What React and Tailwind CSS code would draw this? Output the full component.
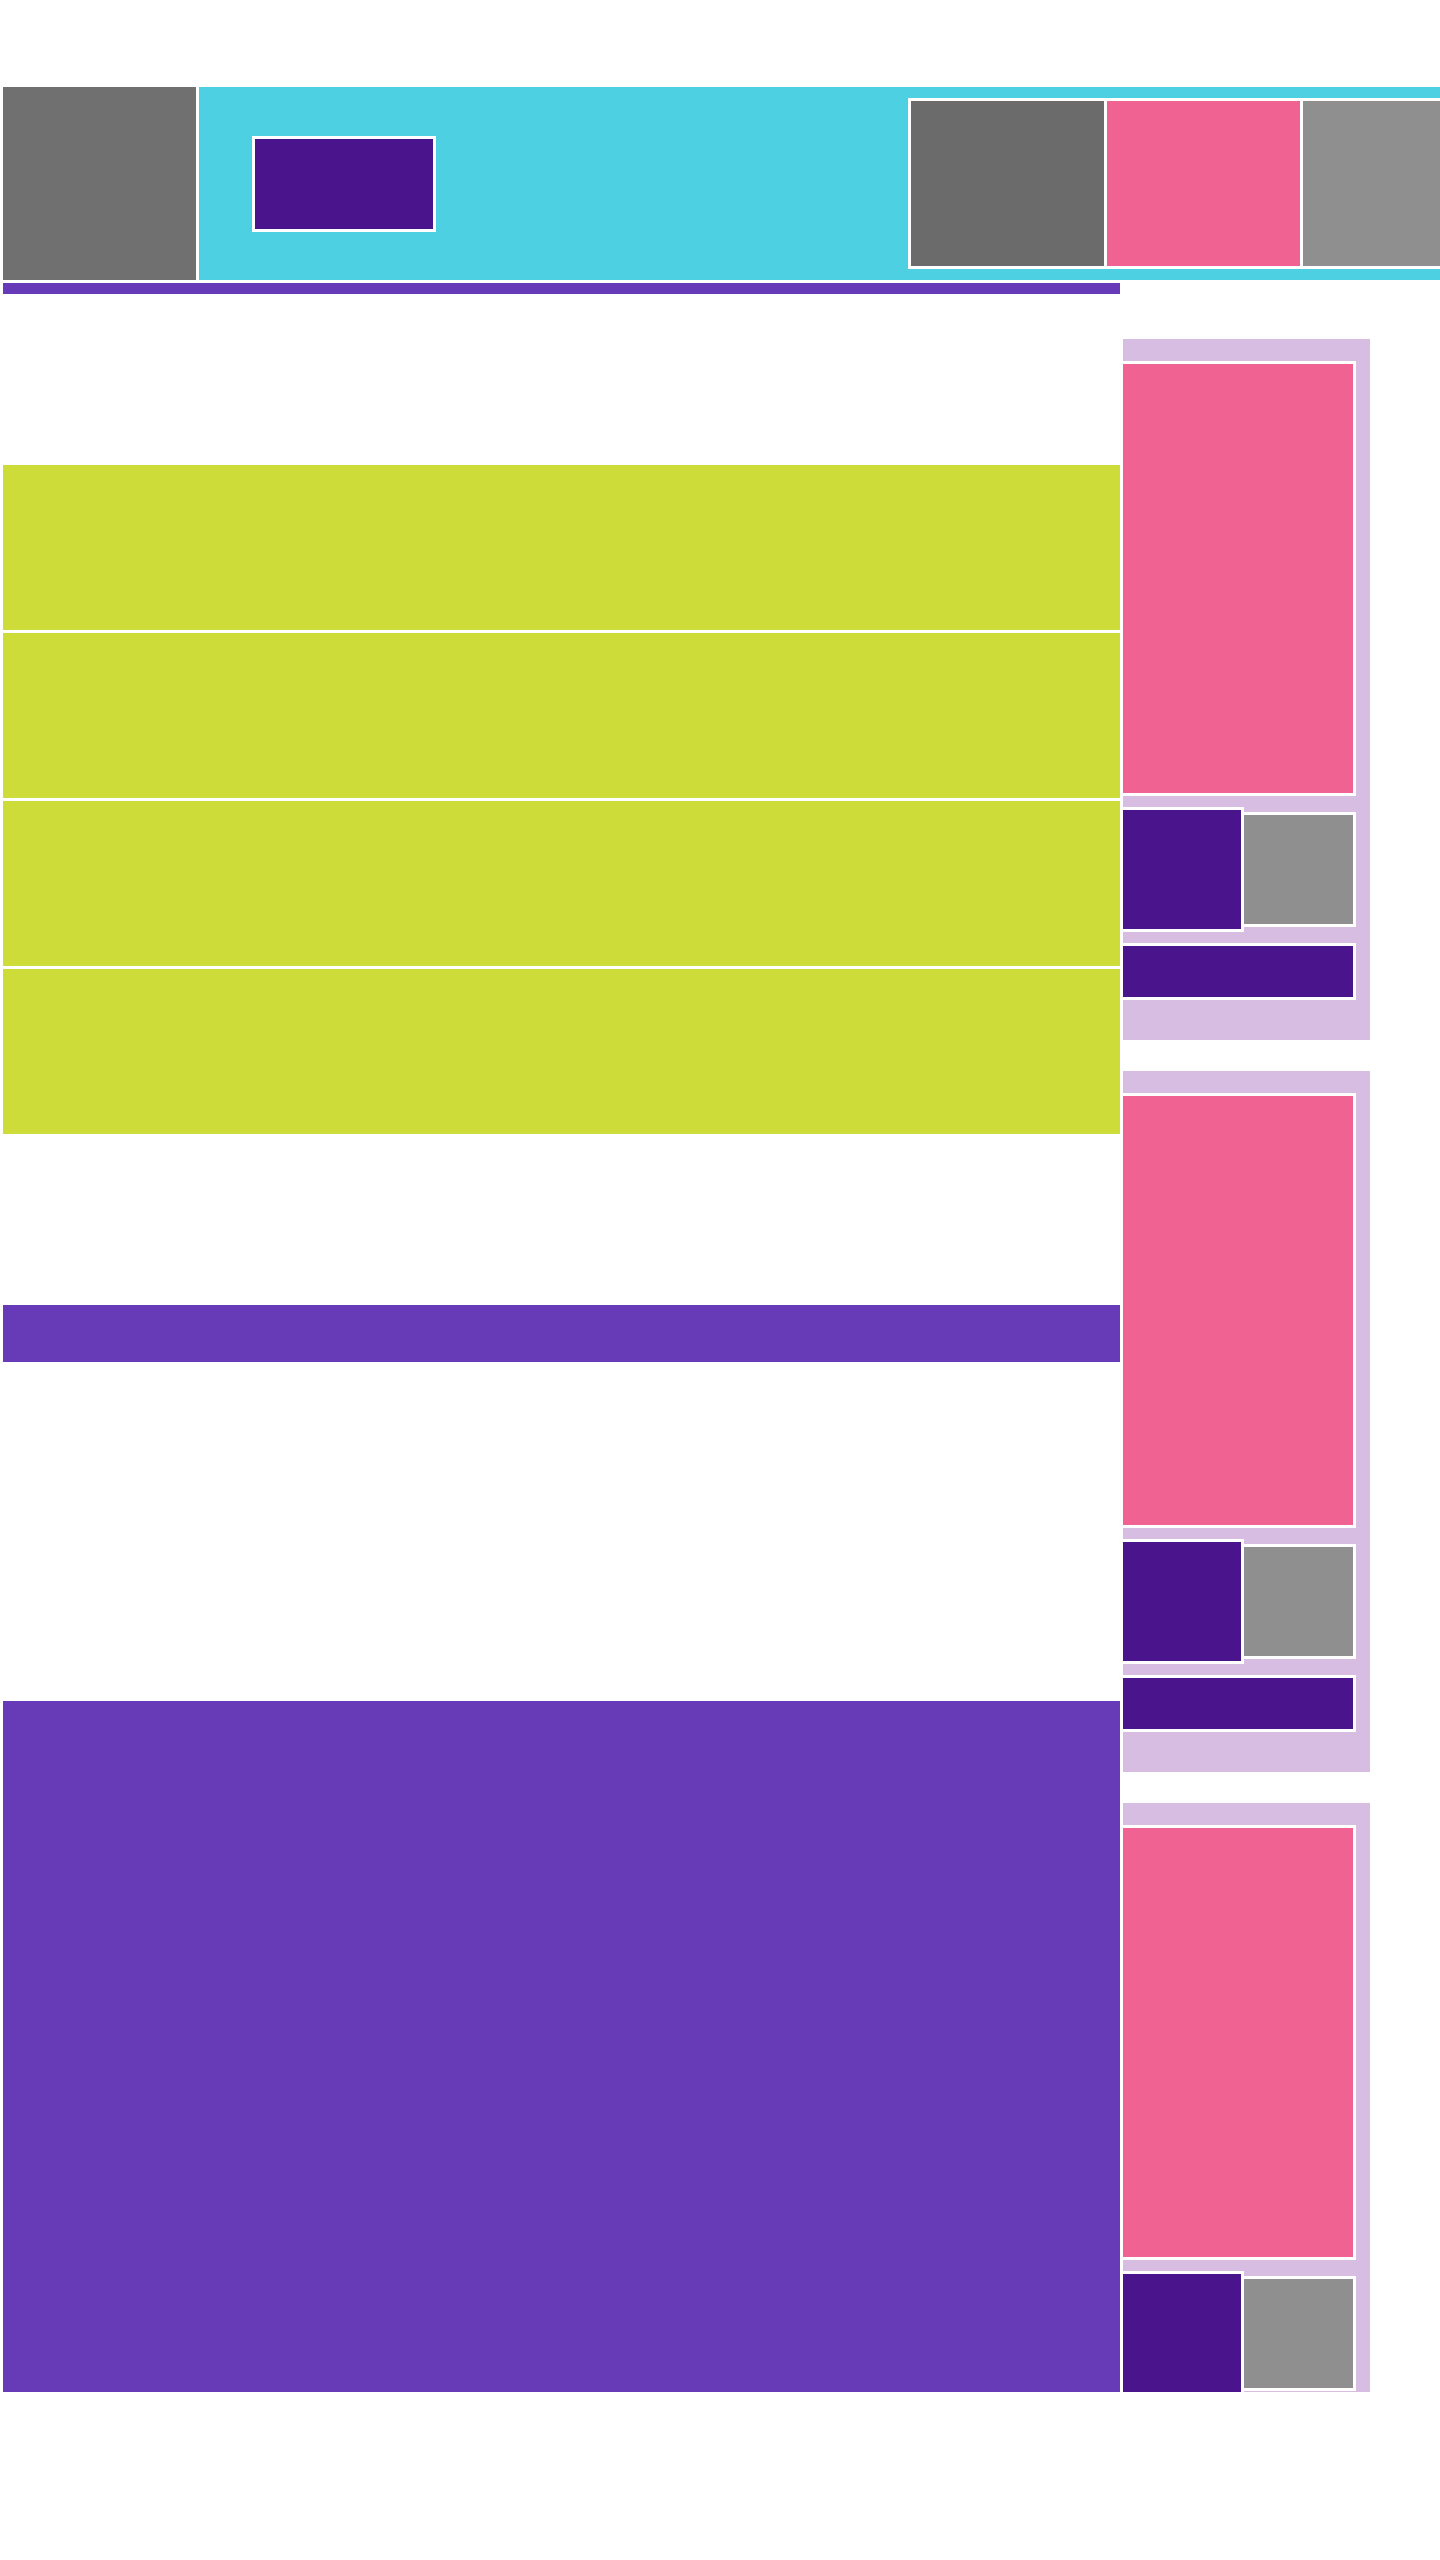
const SidePanel = () => (
  <div className="h-[701px] w-[247px] shrink-0 bg-[#d7bde2] pt-[22px] pr-[14px]">
    <div className="-ml-[3px] h-[435px] w-[236px] border-[3px] border-white bg-[#f06292]" />
    <div className="-ml-[3px] mt-[11px] flex h-[125px] items-center">
      <div className="h-[125px] w-[124px] shrink-0 border-[3px] border-white bg-[#4a148c]" />
      <div className="-ml-[3px] h-[115px] w-[115px] shrink-0 border-[3px] border-white bg-[#8f8f8f]" />
    </div>
    <div className="-ml-[3px] mt-[11px] h-[57px] w-[236px] border-[3px] border-white bg-[#4a148c]" />
  </div>
);

const App = () => {
  return (
    <div className="h-[2560px] w-[1440px] overflow-hidden bg-white pt-[87px] pl-[3px]">
      <header className="flex h-[193px] gap-[3px]">
        <div className="h-[193px] w-[193px] shrink-0 bg-[#707070]" />
        <div className="flex flex-1 items-center overflow-hidden bg-[#4dd0e1] pl-[53px]">
          <div className="h-[96px] w-[184px] shrink-0 border-[3px] border-white bg-[#4a148c]" />
          <div className="ml-[472px] flex h-[171px] shrink-0 gap-[3px] bg-white p-[3px]">
            <div className="h-[165px] w-[193px] shrink-0 bg-[#6b6b6b]" />
            <div className="h-[165px] w-[193px] shrink-0 bg-[#f06292]" />
            <div className="h-[165px] w-[193px] shrink-0 bg-[#8f8f8f]" />
          </div>
        </div>
      </header>

      <div className="mt-[3px] h-[11px] w-[1117px] bg-[#673ab7]" />

      <div className="mt-[45px] flex h-[2053px] overflow-hidden">
        <main className="w-[1117px] shrink-0 pt-[126px]">
          <div className="flex flex-col gap-[3px]">
            {[0, 1, 2, 3].map((i) => (
              <div key={i} className="h-[165px] bg-[#cddc39]" />
            ))}
          </div>
          <div className="mt-[171px] h-[57px] bg-[#673ab7]" />
          <div className="mt-[339px] h-[691px] bg-[#673ab7]" />
        </main>

        <aside className="ml-[3px] flex flex-col gap-[31px]">
          <SidePanel />
          <SidePanel />
          <SidePanel />
        </aside>
      </div>
    </div>
  );
};

export default App;
